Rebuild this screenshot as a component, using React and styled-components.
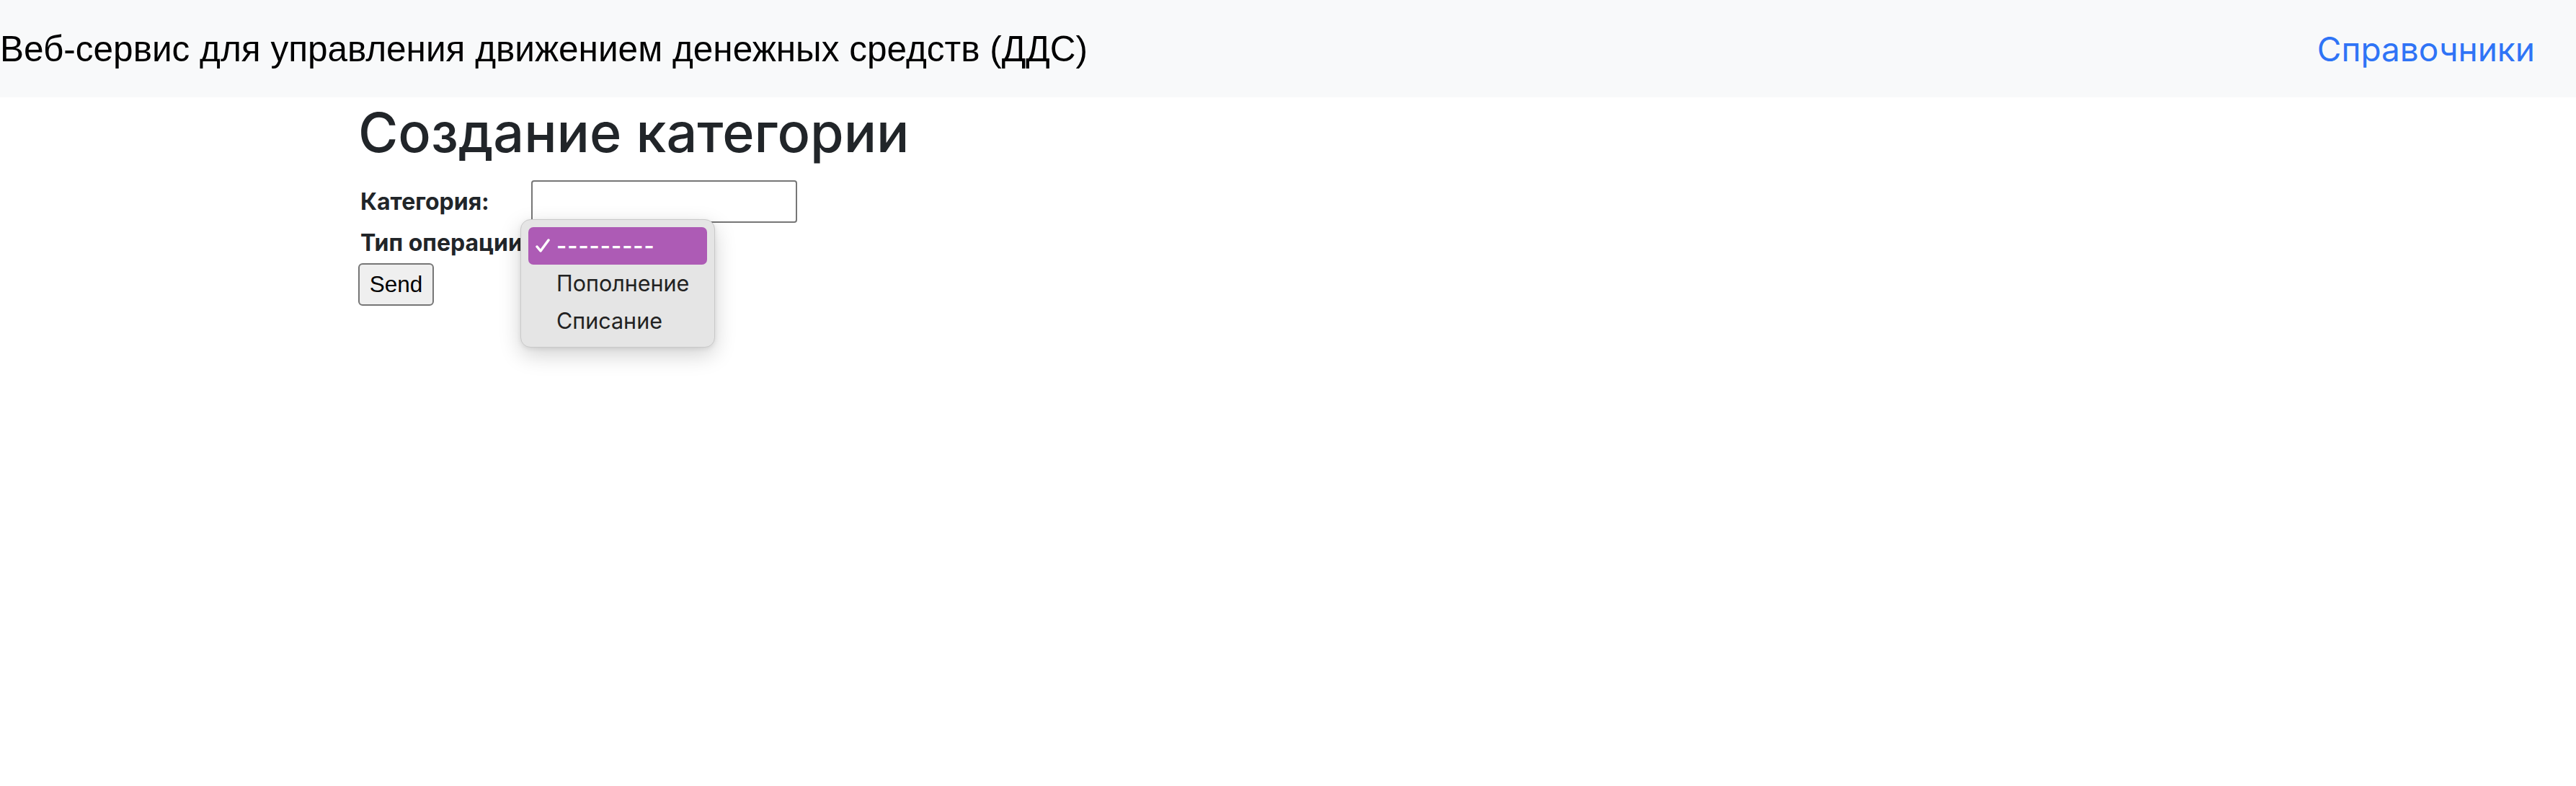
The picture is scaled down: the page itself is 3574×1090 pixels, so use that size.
import React from "react";
import styled, { createGlobalStyle } from "styled-components";

const GlobalStyle = createGlobalStyle`
  html, body, #root {
    margin: 0;
    padding: 0;
    min-height: 100vh;
    background: #fff;
  }
  body {
    font-family: Inter, "Noto Sans", sans-serif;
    color: #212529;
  }
`;

const Page = styled.div`
  min-height: 100vh;
`;

const Navbar = styled.header`
  height: 135px;
  background-color: #f8f9fa;
  display: flex;
  align-items: center;
  justify-content: space-between;
  padding: 0 57px 0 0;
  box-sizing: border-box;
`;

const Brand = styled.span`
  font-family: "Liberation Sans", Arial, sans-serif;
  font-size: 49.5px;
  color: #000;
  white-space: nowrap;
`;

const NavLink = styled.a`
  font-family: Inter, "Noto Sans", sans-serif;
  font-size: 46px;
  color: #2f74f6;
  text-decoration: none;
`;

const Container = styled.main`
  max-width: 2580px;
  margin: 0 auto;
`;

const Title = styled.h1`
  margin: 4px 0 20px;
  font-size: 75.5px;
  font-weight: 500;
  line-height: 1.2;
  color: #212529;
`;

const Form = styled.form`
  display: grid;
  grid-template-columns: 240px auto;
  row-gap: 2px;
  justify-content: start;
  align-items: center;
`;

const Label = styled.label`
  font-size: 32px;
  font-weight: 700;
  color: #212529;
  white-space: nowrap;
  padding-left: 3px;
`;

const TextInput = styled.input`
  width: 369px;
  height: 59px;
  box-sizing: border-box;
  border: 2px solid #767676;
  border-radius: 4px;
  font-size: 30px;
  padding: 0 8px;
  background: #fff;
`;

const SelectCell = styled.div`
  position: relative;
  height: 52px;
`;

const SelectBox = styled.div`
  width: 230px;
  height: 100%;
  box-sizing: border-box;
  border: 2px solid #767676;
  border-radius: 6px;
  background: #fff;
`;

const Menu = styled.ul`
  position: absolute;
  left: -15px;
  top: -7px;
  width: 270px;
  margin: 0;
  padding: 10px;
  box-sizing: border-box;
  list-style: none;
  background: #e5e5e5;
  border: 1.5px solid #c9c9c9;
  border-radius: 14px;
  box-shadow: 0 10px 30px rgba(0, 0, 0, 0.18), 0 2px 6px rgba(0, 0, 0, 0.08);
  z-index: 5;
`;

const MenuItem = styled.li`
  position: relative;
  height: 52px;
  display: flex;
  align-items: center;
  padding-left: 39px;
  border-radius: 7px;
  font-size: 30.5px;
  color: ${(p) => (p.$active ? "#fff" : "#222")};
  background: ${(p) => (p.$active ? "#ad5bb5" : "transparent")};
  font-weight: ${(p) => (p.$active ? 600 : 400)};
  letter-spacing: ${(p) => (p.$active ? "1px" : "0")};
`;

const Check = styled.svg`
  position: absolute;
  left: 10px;
  top: 16px;
`;

const SendButton = styled.button`
  grid-column: 1 / -1;
  justify-self: start;
  width: 105px;
  height: 59px;
  box-sizing: border-box;
  border: 2px solid #767676;
  border-radius: 6px;
  background: #efefef;
  font-family: "Liberation Sans", Arial, sans-serif;
  font-size: 31.5px;
  color: #000;
  padding: 0;
`;

const options = ["---------", "Пополнение", "Списание"];

export default function App() {
  return (
    <Page>
      <GlobalStyle />
      <Navbar>
        <Brand>Веб-сервис для управления движением денежных средств (ДДС)</Brand>
        <NavLink href="#">Справочники</NavLink>
      </Navbar>
      <Container>
        <Title>Создание категории</Title>
        <Form onSubmit={(e) => e.preventDefault()}>
          <Label htmlFor="category">Категория:</Label>
          <TextInput id="category" type="text" />
          <Label>Тип операции:</Label>
          <SelectCell>
            <SelectBox />
            <Menu>
              {options.map((opt, i) => (
                <MenuItem key={opt} $active={i === 0}>
                  {i === 0 && (
                    <Check width="20" height="20" viewBox="0 0 20 20">
                      <polyline
                        points="2,11 7,17 18,2"
                        fill="none"
                        stroke="#fff"
                        strokeWidth="3.5"
                        strokeLinecap="round"
                        strokeLinejoin="round"
                      />
                    </Check>
                  )}
                  {opt}
                </MenuItem>
              ))}
            </Menu>
          </SelectCell>
          <SendButton type="submit">Send</SendButton>
        </Form>
      </Container>
    </Page>
  );
}
